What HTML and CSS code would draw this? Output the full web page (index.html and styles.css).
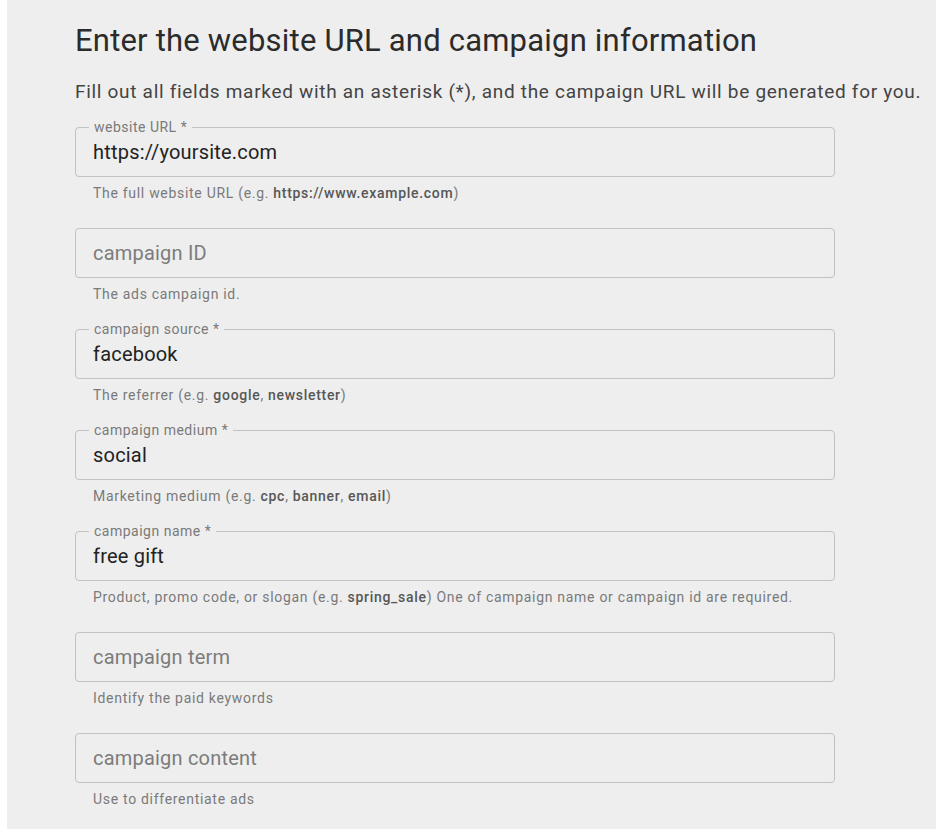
FILE: index.html
```html
<!DOCTYPE html>
<html lang="en">
<head>
  <meta charset="UTF-8">
  <meta name="viewport" content="width=device-width, initial-scale=1.0">
  <title>Campaign URL Builder</title>
  <link rel="stylesheet" href="styles.css">
</head>
<body>
  <div class="page">
    <h1>Enter the website URL and campaign information</h1>
    <p class="intro">Fill out all fields marked with an asterisk (*), and the campaign URL will be generated for you.</p>

    <div class="field">
      <div class="box">
        <label for="website-url">website URL *</label>
        <input type="text" id="website-url" value="https://yoursite.com">
      </div>
      <p class="help">The full website URL (e.g. <b>https://www.example.com</b>)</p>
    </div>

    <div class="field">
      <div class="box">
        <input type="text" id="campaign-id" placeholder="campaign ID">
      </div>
      <p class="help">The ads campaign id.</p>
    </div>

    <div class="field">
      <div class="box">
        <label for="campaign-source">campaign source *</label>
        <input type="text" id="campaign-source" value="facebook">
      </div>
      <p class="help">The referrer (e.g. <b>google</b>, <b>newsletter</b>)</p>
    </div>

    <div class="field">
      <div class="box">
        <label for="campaign-medium">campaign medium *</label>
        <input type="text" id="campaign-medium" value="social">
      </div>
      <p class="help">Marketing medium (e.g. <b>cpc</b>, <b>banner</b>, <b>email</b>)</p>
    </div>

    <div class="field">
      <div class="box">
        <label for="campaign-name">campaign name *</label>
        <input type="text" id="campaign-name" value="free gift">
      </div>
      <p class="help">Product, promo code, or slogan (e.g. <b>spring_sale</b>) One of campaign name or campaign id are required.</p>
    </div>

    <div class="field">
      <div class="box">
        <input type="text" id="campaign-term" placeholder="campaign term">
      </div>
      <p class="help">Identify the paid keywords</p>
    </div>

    <div class="field">
      <div class="box">
        <input type="text" id="campaign-content" placeholder="campaign content">
      </div>
      <p class="help">Use to differentiate ads</p>
    </div>
  </div>
</body>
</html>
```

FILE: styles.css
```css
body {
  margin: 0;
  background: #ffffff;
  font-family: Roboto, "Liberation Sans", Arial, sans-serif;
}

.page {
  margin: 0 4px 0 7px;
  padding: 23px 0 21px 68px;
  background: #eeeeee;
}

h1 {
  margin: 0;
  font-size: 31px;
  line-height: 36px;
  font-weight: 400;
  letter-spacing: 0.2px;
  color: #2b2b2b;
}

.intro {
  margin: 21px 0 23px;
  font-size: 19px;
  line-height: 24px;
  letter-spacing: 0.7px;
  color: #444444;
}

.field {
  width: 760px;
  margin-bottom: 26px;
}

.field:last-child {
  margin-bottom: 0;
}

.box {
  position: relative;
  height: 50px;
  box-sizing: border-box;
  border: 1px solid #c2c2c2;
  border-radius: 4px;
}

.box label {
  position: absolute;
  top: -9px;
  left: 13px;
  padding: 0 5px;
  font-size: 14px;
  line-height: 16px;
  letter-spacing: 0.5px;
  color: #7a7a7a;
  background: #eeeeee;
}

.box input {
  display: block;
  width: 100%;
  height: 48px;
  box-sizing: border-box;
  padding: 0 17px;
  border: none;
  background: transparent;
  font-family: inherit;
  font-size: 20px;
  letter-spacing: 0.2px;
  color: #222222;
  outline: none;
}

.box input::placeholder {
  color: #7c7c7c;
  opacity: 1;
}

.help {
  margin: 7px 0 0;
  padding-left: 18px;
  font-size: 14px;
  line-height: 18px;
  letter-spacing: 0.7px;
  color: #7a7a7a;
}

.help b {
  font-weight: 500;
  color: #575757;
}
```
